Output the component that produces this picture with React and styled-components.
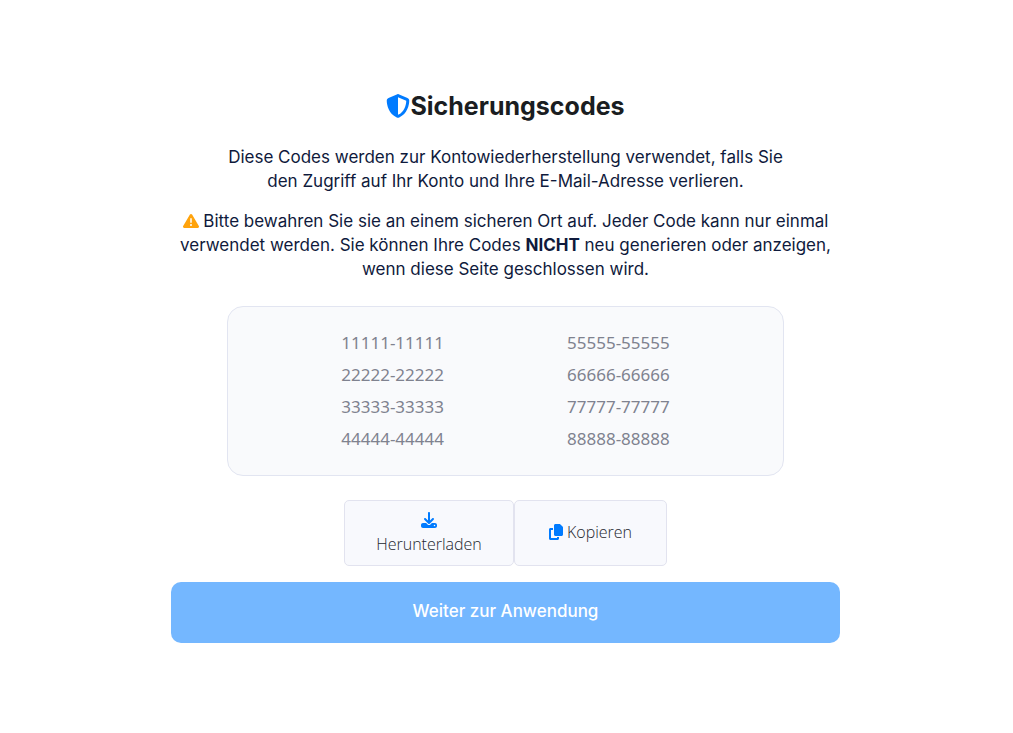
import React from "react";
import styled, { createGlobalStyle } from "styled-components";
import {
  FaShieldHalved,
  FaTriangleExclamation,
  FaDownload,
  FaCopy,
} from "react-icons/fa6";

const GlobalStyle = createGlobalStyle`
  * {
    box-sizing: border-box;
  }
  body {
    margin: 0;
    background-color: #fff;
    color: #0f1a3c;
    font-family: Inter, "Open Sans", sans-serif;
    font-size: 17px;
    line-height: 24px;
  }
`;

const Page = styled.main`
  display: flex;
  justify-content: center;
  padding: 88px 2px 88px 0;
`;

const Panel = styled.section`
  display: flex;
  flex-direction: column;
  align-items: center;
  width: 66.2%;
`;

const Title = styled.h1`
  display: flex;
  align-items: center;
  margin: 0 0 21px;
  color: #1a1d21;
  font-size: 25px;
  font-weight: 700;
  line-height: 36px;
  svg {
    width: 24px;
    height: 24px;
    color: #007bff;
  }
`;

const Text = styled.p`
  width: ${(p) => (p.$narrow ? "83.3%" : "100%")};
  margin: 0 0 16px;
  font-weight: 400;
  text-align: center;
  svg {
    width: 16px;
    height: 16px;
    color: #ffa30c;
    vertical-align: -2px;
  }
`;

const Codes = styled.ul`
  display: grid;
  grid-template-rows: repeat(4, 32px);
  grid-auto-flow: column;
  grid-auto-columns: 1fr;
  width: 83.3%;
  margin: 9px 0 24px;
  padding: 20px 52px;
  list-style: none;
  background-color: #f9fafc;
  border: 1px solid #e2e5f1;
  border-radius: 16px;
`;

const Code = styled.li`
  color: #7f828f;
  font-family: "Noto Sans", sans-serif;
  font-size: 17px;
  line-height: 31px;
  text-align: center;
`;

const Actions = styled.div`
  display: grid;
  grid-template-columns: 170fr 153fr;
  width: 100%;
  max-width: 323px;
  margin-bottom: 16px;
`;

const Action = styled.button`
  display: flex;
  flex-direction: ${(p) => (p.$stacked ? "column" : "row")};
  align-items: center;
  justify-content: center;
  gap: ${(p) => (p.$stacked ? "0" : "4px")};
  min-height: 66px;
  padding: 7px 8px 9px;
  background-color: #f8f9fd;
  border: 1px solid #e2e3ef;
  border-radius: 5px;
  color: #23262e;
  font-family: "Open Sans", sans-serif;
  font-size: 16px;
  font-weight: 300;
  line-height: 24px;
  cursor: pointer;
  svg {
    height: 16px;
    width: ${(p) => (p.$stacked ? "16px" : "14px")};
    margin: 4px 0;
    color: #007bff;
  }
`;

const Continue = styled.button`
  width: 100%;
  padding: 17px 18px 19px;
  background-color: #74b7ff;
  border: 0;
  border-radius: 10px;
  color: #fff;
  font-family: inherit;
  font-size: 17px;
  font-weight: 500;
  line-height: 25px;
  cursor: pointer;
`;

const codes = [
  "11111-11111",
  "22222-22222",
  "33333-33333",
  "44444-44444",
  "55555-55555",
  "66666-66666",
  "77777-77777",
  "88888-88888",
];

const App = () => {
  return (
    <>
      <GlobalStyle />
      <Page>
        <Panel>
          <Title>
            <FaShieldHalved aria-hidden="true" />
            Sicherungscodes
          </Title>

          <Text $narrow>
            Diese Codes werden zur Kontowiederherstellung verwendet, falls Sie
            den Zugriff auf Ihr Konto und Ihre E-Mail-Adresse verlieren.
          </Text>

          <Text>
            <FaTriangleExclamation aria-hidden="true" /> Bitte bewahren Sie sie
            an einem sicheren Ort auf. Jeder Code kann nur einmal verwendet
            werden. Sie können Ihre Codes <strong>NICHT</strong> neu generieren
            oder anzeigen, wenn diese Seite geschlossen wird.
          </Text>

          <Codes>
            {codes.map((code) => (
              <Code key={code}>{code}</Code>
            ))}
          </Codes>

          <Actions>
            <Action type="button" $stacked>
              <FaDownload aria-hidden="true" />
              Herunterladen
            </Action>
            <Action type="button">
              <FaCopy aria-hidden="true" />
              Kopieren
            </Action>
          </Actions>

          <Continue type="button">Weiter zur Anwendung</Continue>
        </Panel>
      </Page>
    </>
  );
};

export default App;
